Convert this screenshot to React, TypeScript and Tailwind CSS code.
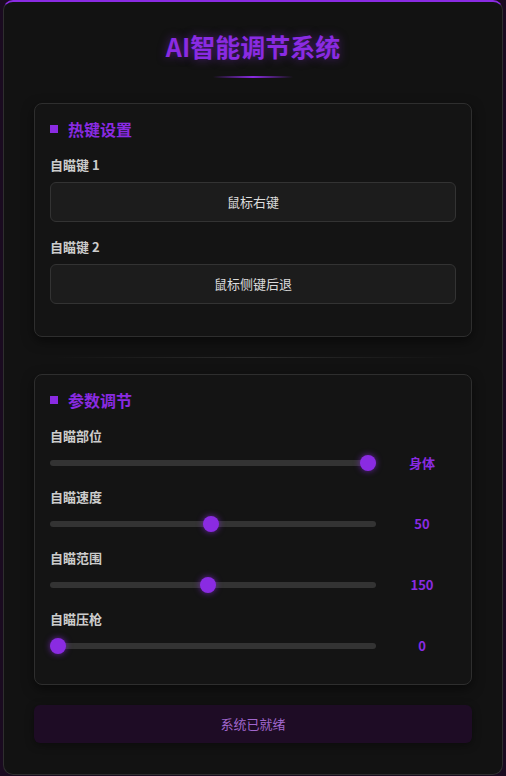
import { useState } from 'react';

const font = { fontFamily: '"Noto Sans CJK SC", "Noto Sans", sans-serif' };

function SectionTitle({ text }: { text: string }) {
  return (
    <div className="flex items-center gap-[10px] mb-[17px] h-[20px]">
      <span className="w-[8px] h-[8px] bg-[#8a2be2]" />
      <span className="text-[16px] leading-[20px] font-bold text-[#8a2be2]">{text}</span>
    </div>
  );
}

function KeyField({ label, value }: { label: string; value: string }) {
  return (
    <div className="mb-4">
      <div className="text-[13px] leading-[18px] font-bold text-[#cccccc] mb-2">{label}</div>
      <button className="w-full h-[40px] rounded-[6px] border border-[#333333] bg-[#1c1c1c] text-[13px] text-[#dddddd]">
        {value}
      </button>
    </div>
  );
}

function SliderRow({ label, pct, value }: { label: string; pct: number; value: string }) {
  return (
    <div className="mb-[13px]">
      <div className="text-[13px] leading-[18px] font-bold text-[#cccccc] mb-[6px]">{label}</div>
      <div className="flex items-center h-[24px]">
        <div className="relative flex-1 h-[6px] rounded-full bg-[#333333]">
          <div
            className="absolute top-1/2 w-[16px] h-[16px] -mt-[8px] rounded-full bg-[#8a2be2] shadow-[0_0_6px_rgba(138,43,226,0.7)]"
            style={{ left: `calc(${pct}% - ${(pct / 100) * 16}px)` }}
          />
        </div>
        <div className="ml-[15px] mr-[3px] w-[62px] text-center text-[13px] font-bold text-[#8a2be2]">{value}</div>
      </div>
    </div>
  );
}

export default function App() {
  const [status] = useState('系统已就绪');

  return (
    <div className="min-h-screen bg-[#1a0b20] px-[3px]" style={font}>
      <div className="h-[775px] rounded-[10px] border border-[#2e2e2e] border-t-2 border-t-[#8a2be2] bg-[#121212] px-[30px] pt-[28px]">
        {/* 标题 */}
        <h1 className="text-center text-[25px] leading-[32px] font-bold text-[#8a2be2] [text-shadow:0_0_10px_rgba(138,43,226,0.5)]">
          AI智能调节系统
        </h1>
        <div className="mx-auto mt-[14px] w-[80px] h-[2px] bg-gradient-to-r from-transparent via-[#8a2be2] to-transparent" />

        {/* 热键设置 */}
        <div className="mt-[25px] rounded-[8px] border border-[#2e2e2e] bg-[#141414] p-[15px] pb-[16px] shadow-[0_4px_12px_rgba(0,0,0,0.5)]">
          <SectionTitle text="热键设置" />
          <KeyField label="自瞄键 1" value="鼠标右键" />
          <KeyField label="自瞄键 2" value="鼠标侧键后退" />
        </div>

        <div className="mx-[20px] mt-5 mb-4 h-px bg-gradient-to-r from-transparent via-[#2c2c2c] to-transparent" />

        {/* 参数调节 */}
        <div className="rounded-[8px] border border-[#2e2e2e] bg-[#141414] p-[15px] pb-[13px] shadow-[0_4px_12px_rgba(0,0,0,0.5)]">
          <SectionTitle text="参数调节" />
          <SliderRow label="自瞄部位" pct={100} value="身体" />
          <SliderRow label="自瞄速度" pct={49.5} value="50" />
          <SliderRow label="自瞄范围" pct={48.5} value="150" />
          <SliderRow label="自瞄压枪" pct={0} value="0" />
        </div>

        <div className="mt-5 h-[38px] flex items-center justify-center rounded-[6px] bg-[#1e0c25] text-[13px] text-[#a066cc] shadow-[0_2px_8px_rgba(0,0,0,0.4)]">
          {status}
        </div>
      </div>
    </div>
  );
}
